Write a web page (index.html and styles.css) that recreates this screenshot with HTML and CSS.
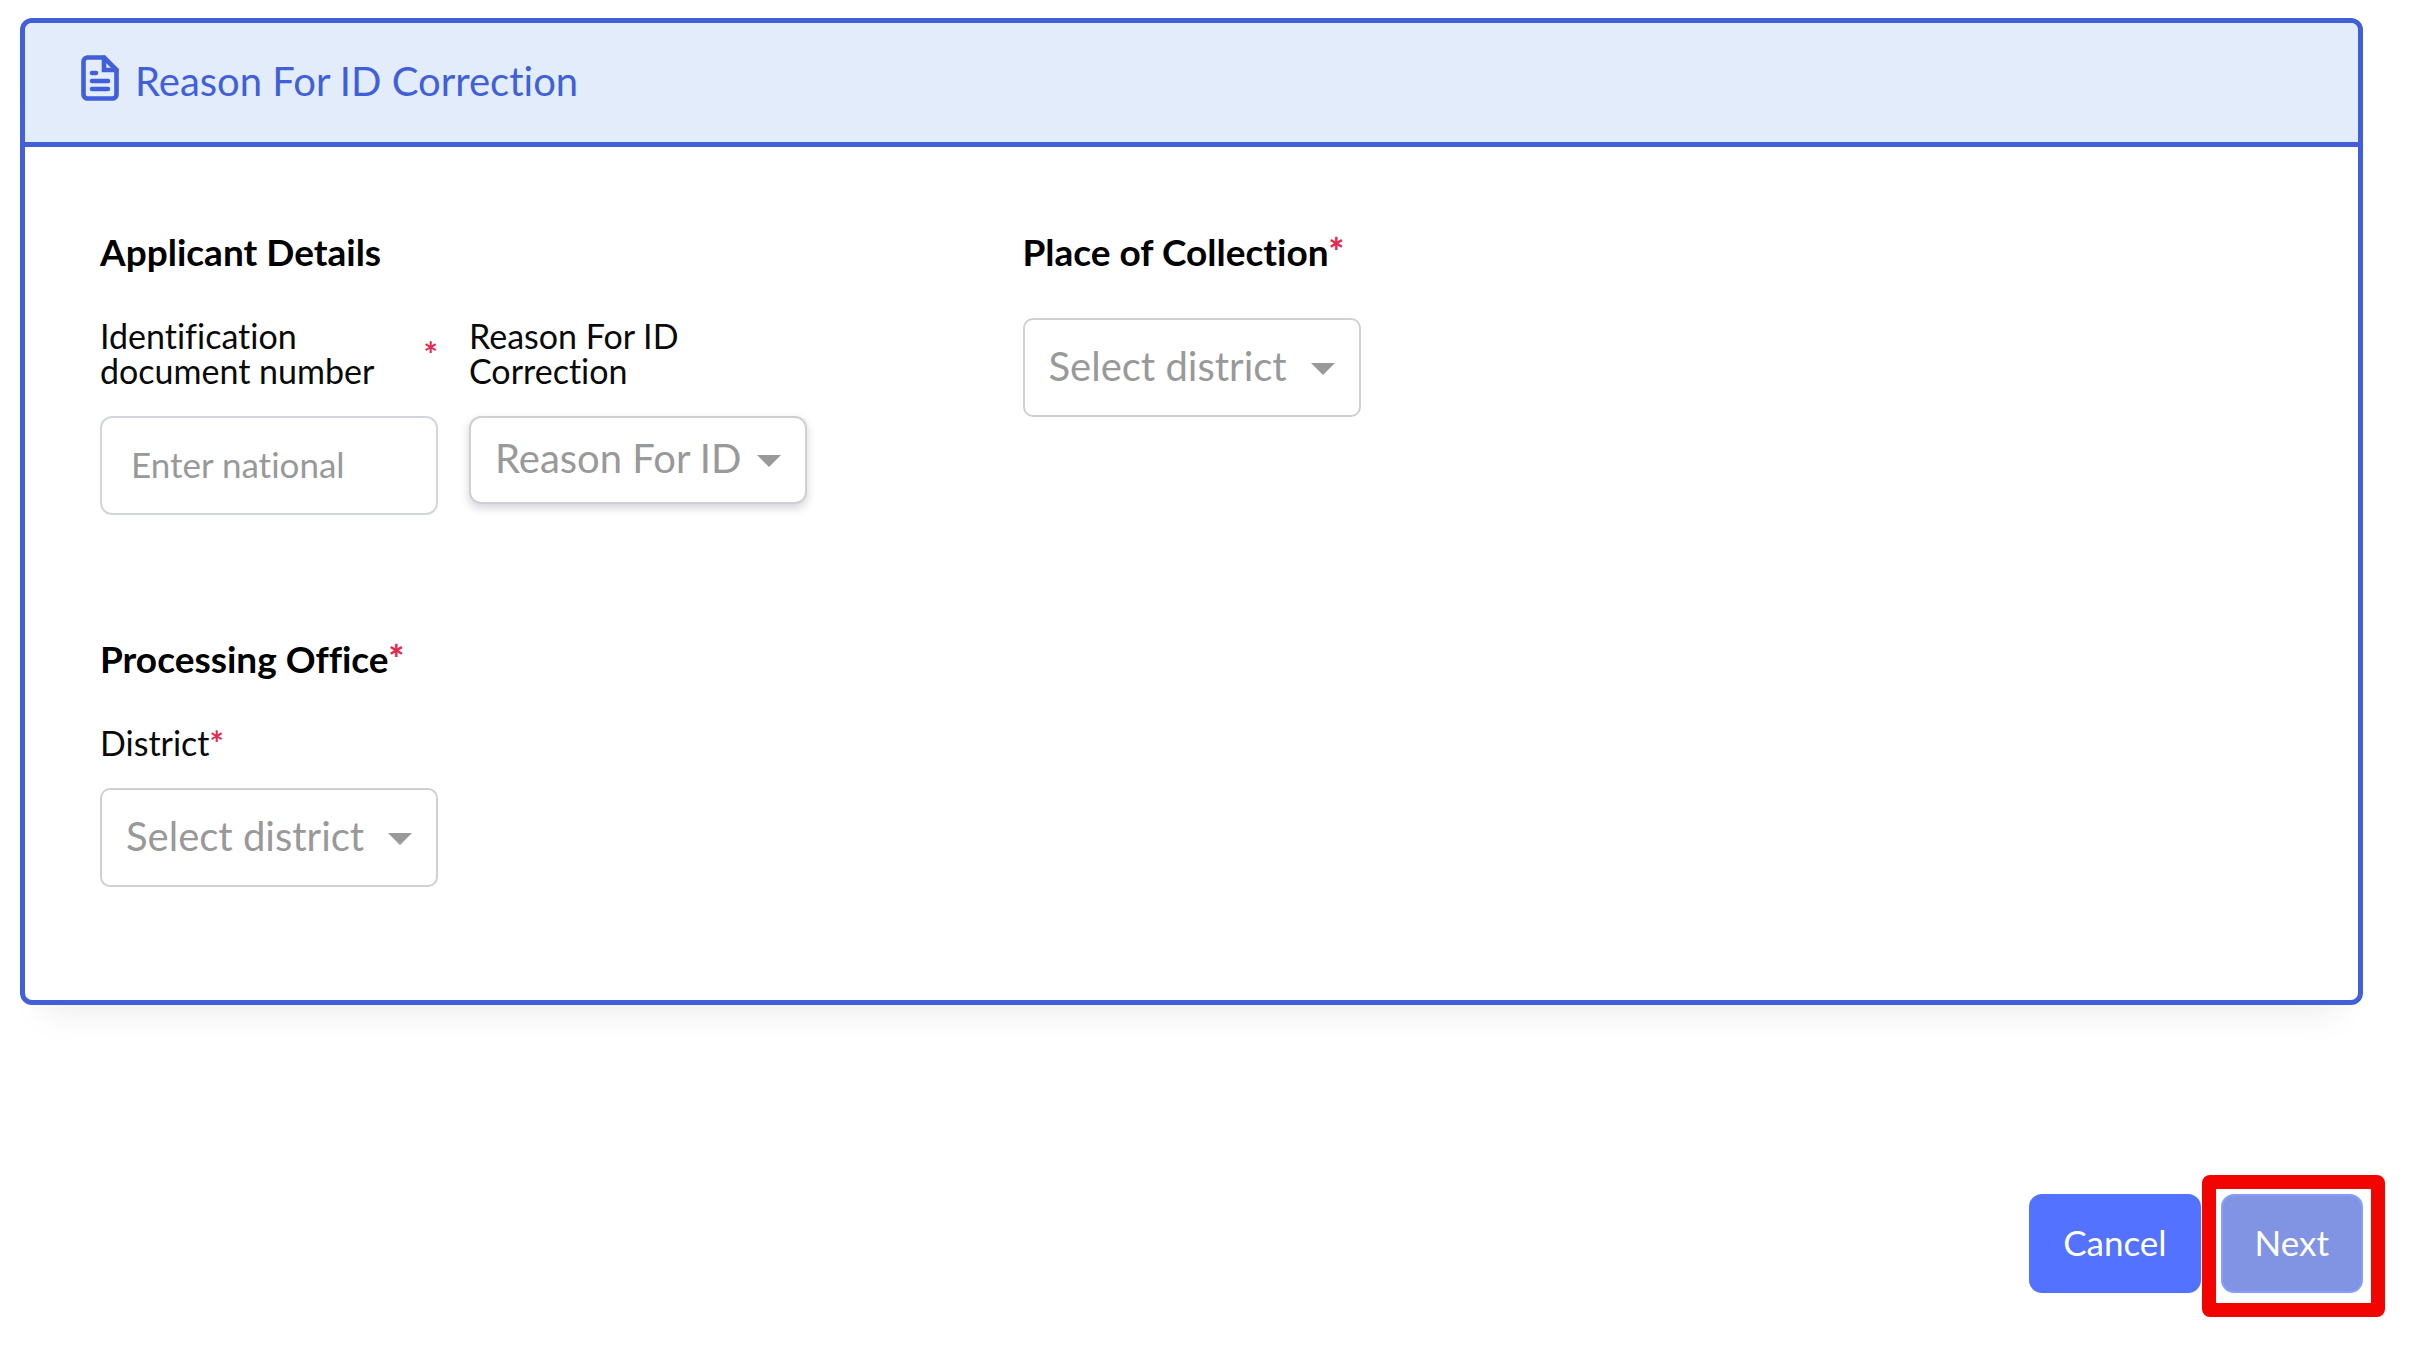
FILE: index.html
```html
<!DOCTYPE html>
<html lang="en">

<head>
    <meta charset="UTF-8">
    <meta name="viewport" content="width=device-width, initial-scale=1.0">
    <title>Reason For ID Correction</title>
    <link rel="stylesheet" href="styles.css">
</head>

<body>
    <form class="page">
        <div class="card">
            <div class="card-header">
                <svg class="card-icon" viewBox="0 0 38 46" fill="none" stroke="currentColor" stroke-width="4.6" stroke-linejoin="round" stroke-linecap="round" aria-hidden="true">
                    <path d="M23 2.5H6.500a4 4 0 0 0-4 4v33a4 4 0 0 0 4 4h25a4 4 0 0 0 4-4V15z" />
                    <path d="M23 2.500v12.500h12.500" stroke-linejoin="miter" />
                    <path d="M11 18h4M11 26h16M11 34h16" />
                </svg>
                <h1>Reason For ID Correction</h1>
            </div>

            <div class="card-body">
                <section class="section">
                    <h2>Applicant Details</h2>
                    <div class="fields">
                        <div class="field">
                            <label for="national-id">
                                <span>Identification document number</span>
                                <span class="required">*</span>
                            </label>
                            <input type="text" class="control" id="national-id" placeholder="Enter national">
                        </div>
                        <div class="field">
                            <label for="reason">Reason For ID Correction</label>
                            <div class="select raised">
                                <select class="control" id="reason">
                                    <option>Reason For ID</option>
                                </select>
                            </div>
                        </div>
                    </div>
                </section>

                <section class="section wide">
                    <h2 id="collection-title">Place of Collection<span class="required">*</span></h2>
                    <div class="fields">
                        <div class="field">
                            <div class="select">
                                <select class="control" aria-labelledby="collection-title">
                                    <option>Select district</option>
                                </select>
                            </div>
                        </div>
                    </div>
                </section>

                <section class="section">
                    <h2>Processing Office<span class="required">*</span></h2>
                    <div class="fields">
                        <div class="field">
                            <label for="office-district"><span>District<span class="required">*</span></span></label>
                            <div class="select">
                                <select class="control" id="office-district">
                                    <option>Select district</option>
                                </select>
                            </div>
                        </div>
                    </div>
                </section>
            </div>
        </div>

        <div class="actions">
            <button type="button" class="button">Cancel</button>
            <div class="highlight">
                <button type="submit" class="button" disabled>Next</button>
            </div>
        </div>
    </form>
</body>

</html>
```
FILE: styles.css
```css
* {
    box-sizing: border-box;
}

body {
    margin: 0;
    color: #0a0a0a;
    background-color: #fff;
    font-family: Lato, "Open Sans", sans-serif;
    font-size: 34px;
    line-height: 35px;
    font-variant-ligatures: none;
}

.page {
    padding: 18px 58px 32px 20px;
}

.card {
    border: 5px solid #405fd9;
    border-radius: 12px;
    box-shadow: 0 32px 32px -24px rgba(0, 0, 0, 0.08);
}

.card-header {
    display: flex;
    align-items: center;
    gap: 16px;
    height: 124px;
    padding: 0 56px;
    color: #405fd9;
    background-color: #e3ecfb;
    border-bottom: 5px solid #405fd9;
    border-radius: 7px 7px 0 0;
}

.card-icon {
    width: 38px;
    height: 46px;
    margin-bottom: 10px;
}

h1 {
    margin: 0 0 2px;
    font-size: 40px;
    font-weight: 400;
}

.card-body {
    display: grid;
    grid-template-columns: repeat(12, 1fr);
    column-gap: 31px;
    row-gap: 126px;
    padding: 87px 75px 113px;
}

.section {
    grid-column: span 5;
}

.section.wide {
    grid-column: span 7;
}

h2 {
    margin: 0 0 48px;
    color: #000;
    font-size: 37px;
    font-weight: 700;
    line-height: 36px;
}

.fields {
    display: grid;
    grid-template-columns: repeat(5, 1fr);
    column-gap: 31px;
    align-items: start;
}

.wide .fields {
    grid-template-columns: repeat(7, 1fr);
}

.field {
    grid-column: span 2;
}

label {
    display: flex;
    justify-content: space-between;
    align-items: center;
    margin-bottom: 28px;
}

.required {
    color: #e6294f;
    font-weight: 700;
}

h2 .required {
    font-weight: 900;
}

.control {
    display: block;
    width: 100%;
    height: 99px;
    margin: 0;
    padding: 0 29px 3px;
    color: #999;
    background-color: #fff;
    border: 2px solid #d2d6dc;
    border-radius: 12px;
    font-family: inherit;
    font-size: 35px;
    font-variant-ligatures: none;
}

.control::placeholder {
    color: #999;
    opacity: 1;
}

.select {
    position: relative;
}

.select .control {
    appearance: none;
    padding: 0 24px 4px;
    border-color: #d0d0d0;
    border-radius: 10px;
    font-size: 40px;
    opacity: 1;
}

.select::after {
    content: "";
    position: absolute;
    top: 50%;
    right: 26px;
    margin-top: -5px;
    border: 12px solid transparent;
    border-top-color: #999;
    border-bottom: 0;
    pointer-events: none;
}

.raised .control {
    height: 88px;
    border-radius: 12px;
    box-shadow: 0 4px 10px rgba(50, 50, 93, 0.22);
}

.actions {
    display: flex;
    justify-content: flex-end;
    gap: 20px;
    margin-top: 189px;
}

.button {
    display: block;
    height: 99px;
    padding: 0 32px 4px;
    color: #fff;
    background-color: #5272ff;
    border: 2px solid #5272ff;
    border-radius: 13px;
    font-family: inherit;
    font-size: 35px;
    cursor: pointer;
}

.button:disabled {
    background-color: #8094e3;
    border-color: #879eff;
    cursor: default;
}

.highlight {
    position: relative;
}

/* marks the next step, drawn over the page around the button */
.highlight::after {
    content: "";
    position: absolute;
    inset: -19px -22px -24px -19px;
    border: 14px solid #f20500;
    border-radius: 8px;
    pointer-events: none;
}
```
